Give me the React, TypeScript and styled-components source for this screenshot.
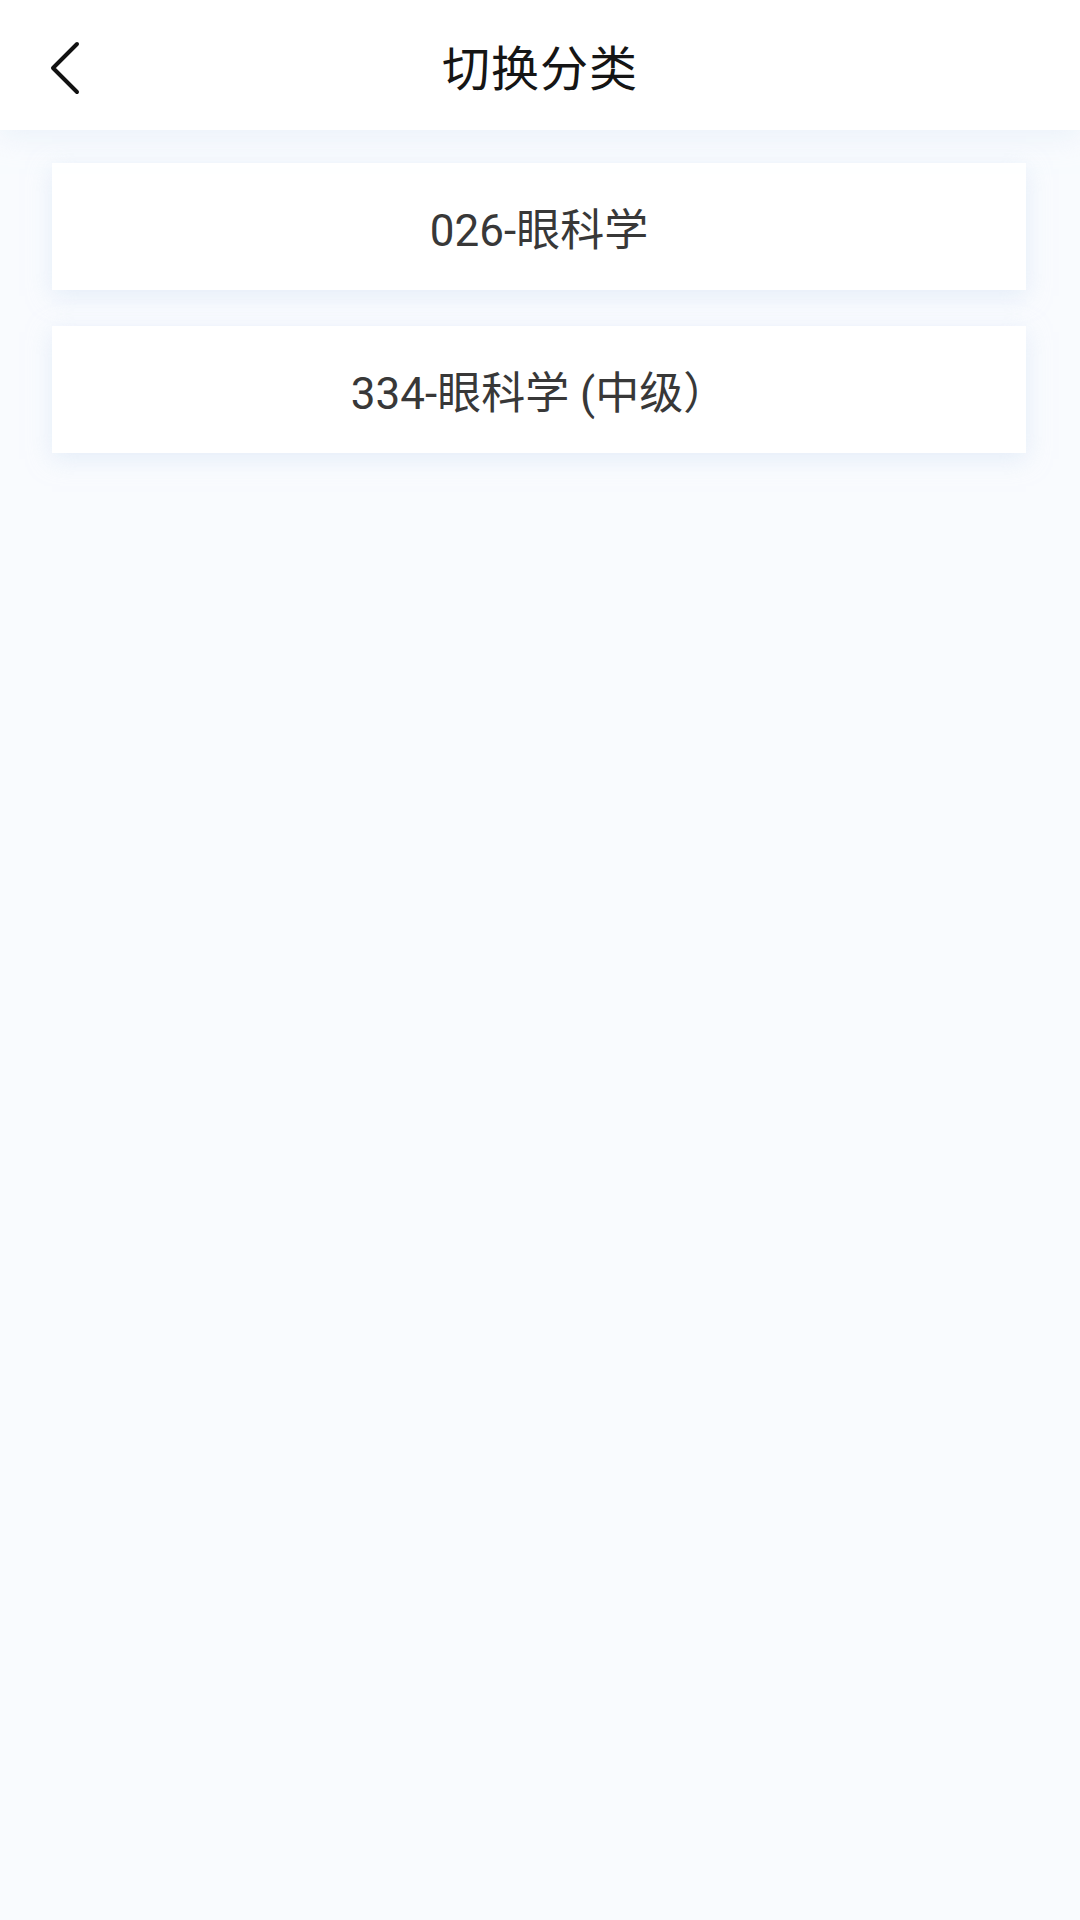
import styled, { createGlobalStyle } from 'styled-components';

const GlobalStyle = createGlobalStyle`
  html, body {
    margin: 0;
    padding: 0;
    background: #f9fbfe;
  }
  #root {
    min-height: 1920px;
  }
`;

const Page = styled.div`
  min-height: 1920px;
  background: #f9fbfe;
  font-family: Roboto, 'Noto Sans CJK SC', sans-serif;
`;

const Header = styled.div`
  position: relative;
  height: 130px;
  background: #ffffff;
  display: flex;
  align-items: center;
  justify-content: center;
  box-shadow: 0 8px 24px rgba(225, 236, 248, 0.55);
  z-index: 1;
`;

const BackBtn = styled.button`
  position: absolute;
  left: 40px;
  top: 36px;
  width: 48px;
  height: 64px;
  padding: 0;
  border: none;
  background: transparent;
  display: flex;
  align-items: center;
  justify-content: center;
`;

const Title = styled.h1`
  margin: 0;
  font-size: 48px;
  font-weight: 400;
  color: #151515;
  letter-spacing: 1px;
`;

const List = styled.div`
  display: flex;
  flex-direction: column;
  gap: 36px;
  padding: 33px 54px 0 52px;
`;

const Card = styled.div`
  height: 127px;
  background: #ffffff;
  display: flex;
  align-items: center;
  justify-content: center;
  font-size: 44px;
  color: #383838;
  box-shadow: 0 6px 22px rgba(212, 226, 244, 0.55);
`;

const categories = ['026-眼科学', '334-眼科学 (中级）'];

export default function App() {
  return (
    <Page>
      <GlobalStyle />
      <Header>
        <BackBtn>
          <svg width="36" height="54" viewBox="0 0 36 54" fill="none">
            <path
              d="M31 3 L7 27 L31 51"
              stroke="#111"
              strokeWidth="4"
              strokeLinecap="round"
              strokeLinejoin="round"
            />
          </svg>
        </BackBtn>
        <Title>切换分类</Title>
      </Header>
      <List>
        {categories.map((c) => (
          <Card key={c}>{c}</Card>
        ))}
      </List>
    </Page>
  );
}
